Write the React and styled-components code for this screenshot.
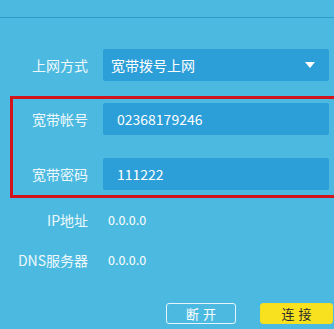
import React from 'react';
import styled, { createGlobalStyle } from 'styled-components';

const GlobalStyle = createGlobalStyle`
  html, body {
    margin: 0;
    padding: 0;
    background: #4cbae0;
    overflow: hidden;
  }
  body {
    font-family: "Noto Sans CJK SC", "Liberation Sans", sans-serif;
  }
`;

// Style
const Page = styled.div`
  width: 334px;
  height: 329px;
  background: #4cbae0;
  overflow: hidden;
  display: flex;
  flex-direction: column;
`;

const TopStrip = styled.div`
  height: 17px;
  border-bottom: 1px solid #2f9bc8;
  flex-shrink: 0;
`;

const Form = styled.div`
  display: flex;
  flex-direction: column;
  padding-top: 31px;
`;

const Row = styled.div`
  display: grid;
  grid-template-columns: ${(props) => props.labelWidth || 88}px 1fr;
  column-gap: ${(props) => props.gap || 15}px;
  align-items: center;
  height: ${(props) => props.height || 32}px;
  margin-top: ${(props) => props.top || 0}px;
`;

const Label = styled.span`
  text-align: right;
  color: #eef8fc;
  font-size: 14px;
  line-height: 1;
  white-space: nowrap;
`;

const Field = styled.div`
  height: 32px;
  margin-right: 5px;
  border-radius: 2px;
  background: #2c9ed8;
  display: flex;
  align-items: center;
  justify-content: space-between;
  padding: 0 14px 0 ${(props) => props.pad || 14}px;
  color: #ffffff;
  font-size: 14px;
  line-height: 1;
`;

const Caret = styled.span`
  width: 0;
  height: 0;
  border-left: 5px solid transparent;
  border-right: 5px solid transparent;
  border-top: 6px solid #ffffff;
`;

const Highlight = styled.div`
  margin: 15px -12px 0 10px;
  border: 3px solid #d2141c;
  padding: 4px 0 5px 0;
  display: flex;
  flex-direction: column;
  gap: 23px;
`;

const InnerRow = styled(Row)`
  margin-right: 9px;
`;

const Value = styled.span`
  color: #ffffff;
  font-size: 12.5px;
  line-height: 1;
`;

const Buttons = styled.div`
  display: flex;
  justify-content: flex-end;
  gap: 24px;
  margin-top: 33px;
  padding-right: 1px;
`;

const Button = styled.button`
  all: unset;
  box-sizing: border-box;
  width: ${(props) => (props.primary ? 73 : 70)}px;
  height: 21px;
  border-radius: 3px;
  border: 1px solid ${(props) => (props.primary ? '#f6df1e' : '#e6f5fb')};
  background: ${(props) => (props.primary ? '#f8e11e' : 'transparent')};
  color: ${(props) => (props.primary ? '#2b2b2b' : '#ffffff')};
  font-size: 13px;
  line-height: 19px;
  text-align: center;
  letter-spacing: 4px;
  text-indent: 4px;
`;

const App = () => {
  return (
    <Page>
      <GlobalStyle />
      <TopStrip />
      <Form>
        <Row>
          <Label>上网方式</Label>
          <Field pad={8}>
            <span>宽带拨号上网</span>
            <Caret />
          </Field>
        </Row>

        <Highlight>
          <InnerRow labelWidth={75}>
            <Label>宽带帐号</Label>
            <Field>02368179246</Field>
          </InnerRow>
          <InnerRow labelWidth={75}>
            <Label>宽带密码</Label>
            <Field>111222</Field>
          </InnerRow>
        </Highlight>

        <Row height={20} top={12} gap={20}>
          <Label>IP地址</Label>
          <Value>0.0.0.0</Value>
        </Row>
        <Row height={20} top={20} gap={20}>
          <Label>DNS服务器</Label>
          <Value>0.0.0.0</Value>
        </Row>

        <Buttons>
          <Button>断开</Button>
          <Button primary>连接</Button>
        </Buttons>
      </Form>
    </Page>
  );
};

export default App;
